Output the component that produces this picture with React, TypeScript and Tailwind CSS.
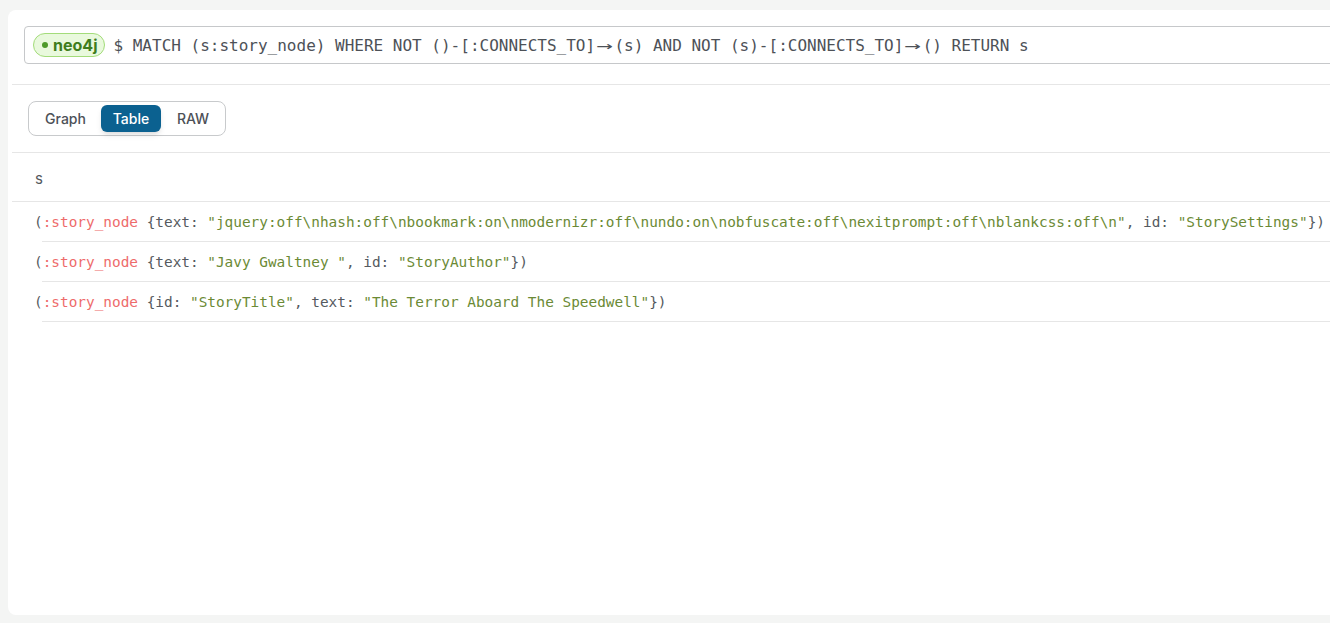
import React from "react";

const mono = { fontFamily: '"DejaVu Sans Mono", "Liberation Mono", monospace' };

const Arrow = () => <span className="inline-block w-[2ch] scale-x-[1.7] text-center">→</span>;

const Label = ({ children }: { children: React.ReactNode }) => (
  <span className="text-[#ee6b6b]">{children}</span>
);
const Str = ({ children }: { children: React.ReactNode }) => (
  <span className="text-[#6b8a35]">{children}</span>
);

const rows: React.ReactNode[] = [
  <>
    {"("}<Label>:story_node</Label>{" {text: "}<Str>"jquery:off\nhash:off\nbookmark:on\nmodernizr:off\nundo:on\nobfuscate:off\nexitprompt:off\nblankcss:off\n"</Str>{", id: "}<Str>"StorySettings"</Str>{"})"}
  </>,
  <>
    {"("}<Label>:story_node</Label>{" {text: "}<Str>"Javy Gwaltney "</Str>{", id: "}<Str>"StoryAuthor"</Str>{"})"}
  </>,
  <>
    {"("}<Label>:story_node</Label>{" {id: "}<Str>"StoryTitle"</Str>{", text: "}<Str>"The Terror Aboard The Speedwell"</Str>{"})"}
  </>,
];

export default function App() {
  return (
    <div className="h-[623px] w-[1330px] overflow-hidden bg-[#f4f5f4] pt-[10px] pl-2" style={{ fontFamily: "Inter, 'Noto Sans', sans-serif" }}>
      <div className="h-[605px] w-[1360px] rounded-lg bg-white">
        <div className="ml-1">
          {/* query bar */}
          <div className="border-b border-[#e6e6e6] pt-4 pb-5 pl-3">
            <div className="flex h-[38px] items-center rounded-l-[4px] border border-[#c6c8ca] pl-2">
              <span className="flex h-6 items-center gap-[5px] rounded-full border border-[#a3dc7a] bg-[#e9f9dd] pl-[8px] pr-[7px] text-[16px] font-bold text-[#3f7d1c]">
                <span className="h-[6px] w-[6px] rounded-full bg-[#4e9a2a]" />
                neo4j
              </span>
              <span className="ml-2 whitespace-pre pt-[2px] text-[16px] text-[#4d5157]" style={mono}>
                {"$ MATCH (s:story_node) WHERE NOT ()-[:CONNECTS_TO]"}<Arrow />{"(s) AND NOT (s)-[:CONNECTS_TO]"}<Arrow />{"() RETURN s"}
              </span>
            </div>
          </div>

          {/* view tabs */}
          <div className="border-b border-[#e6e6e6] pt-4 pb-[16px] pl-4">
            <div className="inline-flex h-[35px] items-center rounded-lg border border-[#c8cacc] p-[3px]">
              <button className="h-[27px] w-[69px] pr-[2px] text-[14px] font-medium text-[#4d5157]">Graph</button>
              <button className="h-[27px] w-[60px] rounded-md bg-[#0b6190] text-[14px] font-medium text-white shadow-md">Table</button>
              <button className="h-[27px] w-[61px] pl-[3px] text-[14px] font-medium text-[#4d5157]">RAW</button>
            </div>
          </div>

          {/* table header */}
          <div className="flex h-[49px] items-center border-b border-[#e6e6e6] pl-[23px] pt-[5px] text-[15px] text-[#55595e]">s</div>

          {/* rows */}
          {rows.map((r, i) => (
            <div key={i} className="ml-[30px] border-b border-[#e6e6e6]">
              <div className="-ml-[8px] flex h-[39px] items-center whitespace-pre pt-[3px] text-[14.4px] text-[#555a60]" style={mono}>
                {r}
              </div>
            </div>
          ))}
        </div>
      </div>
    </div>
  );
}
